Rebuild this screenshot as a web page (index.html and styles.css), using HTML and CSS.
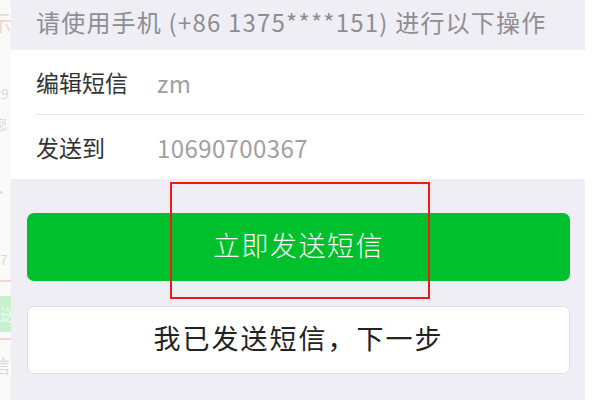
FILE: index.html
```html
<!DOCTYPE html>
<html lang="zh-CN">
<head>
    <meta charset="UTF-8">
    <meta name="viewport" content="width=device-width, initial-scale=1.0">
    <title>发送短信验证</title>
    <link rel="stylesheet" href="styles.css">
</head>
<body>
    <div class="page">
        <div class="side">
            <div class="side-title">示</div>
            <div class="side-line side-num">29</div>
            <div class="side-line side-you">您</div>
            <div class="side-line side-dots">···</div>
            <div class="side-line side-seven">7</div>
            <div class="side-pink"></div>
            <div class="side-green">送</div>
            <div class="side-pink"></div>
            <div class="side-line side-last">信</div>
        </div>

        <div class="panel">
            <div class="tip">请使用手机 (+86 1375****151) 进行以下操作</div>

            <div class="list">
                <div class="row">
                    <span class="label">编辑短信</span>
                    <span class="value">zm</span>
                </div>
                <div class="row">
                    <span class="label">发送到</span>
                    <span class="value">10690700367</span>
                </div>
            </div>

            <div class="actions">
                <button class="btn btn-green">立即发送短信</button>
                <button class="btn btn-white">我已发送短信，下一步</button>
                <div class="mark"></div>
            </div>
        </div>
    </div>
</body>
</html>
```

FILE: styles.css
```css
body {
    margin: 0;
    background: #fff;
    font-family: "Noto Sans CJK SC", "Noto Sans", sans-serif;
}

.page {
    display: flex;
    width: 600px;
    height: 400px;
    overflow: hidden;
}

/* faded screenshot behind the panel */
.side {
    width: 11px;
    flex-shrink: 0;
    background: #fafafa;
    overflow: hidden;
    display: flex;
    flex-direction: column;
    color: #d8d8d8;
}

.side-title {
    margin-top: 8px;
    margin-left: -10px;
    font-size: 22px;
    line-height: 26px;
    color: #f0d8c8;
}

.side-line {
    margin-left: -6px;
    font-size: 13px;
    line-height: 16px;
}

.side-num {
    margin-top: 52px;
}

.side-you {
    margin-top: 14px;
}

.side-dots {
    margin-top: 52px;
}

.side-seven {
    margin-top: 52px;
    margin-left: 0;
}

.side-pink {
    height: 2px;
    background: #f8d4d4;
    margin-top: 12px;
}

.side-green {
    height: 36px;
    margin-top: 14px;
    background: #c8efd0;
    color: #eefaf0;
    font-size: 16px;
    line-height: 36px;
    margin-left: -8px;
    padding-left: 8px;
    margin-bottom: -6px;
}

.side-last {
    margin-top: 14px;
    margin-left: -8px;
    font-size: 18px;
    line-height: 22px;
}

.panel {
    width: 574px;
    flex-shrink: 0;
    background: #efeef4;
    display: flex;
    flex-direction: column;
}

.tip {
    height: 50px;
    padding-left: 25px;
    font-size: 24px;
    letter-spacing: 1.2px;
    line-height: 44px;
    color: #8d8d92;
    white-space: nowrap;
}

.list {
    background: #fff;
    padding-left: 25px;
}

.row {
    height: 64px;
    display: flex;
    align-items: center;
}

.row + .row {
    border-top: 1px solid #e6e6e8;
}

.label {
    width: 121px;
    font-size: 23px;
    color: #333;
}

.value {
    font-size: 24px;
    letter-spacing: 0.4px;
    color: #a0a0a4;
}

.actions {
    position: relative;
    display: flex;
    flex-direction: column;
    gap: 25px;
    padding: 34px 15px 0 16px;
}

.btn {
    height: 68px;
    padding: 0 0 6px;
    border-radius: 7px;
    font-family: inherit;
    letter-spacing: 1.5px;
    cursor: pointer;
}

.btn-green {
    font-size: 27px;
    font-weight: 300;
    background: #00c02c;
    border: none;
    color: #fff;
}

.btn-white {
    font-size: 27px;
    letter-spacing: 2px;
    background: #fff;
    border: 1px solid #dedde2;
    color: #222;
}

/* red annotation box */
.mark {
    position: absolute;
    left: 159px;
    top: 3px;
    width: 256px;
    height: 113px;
    border: 2px solid #f01818;
}
```
